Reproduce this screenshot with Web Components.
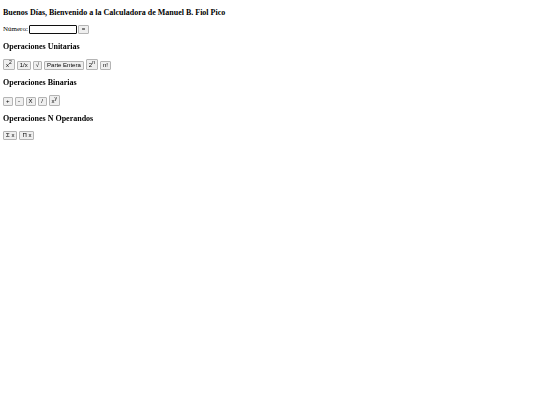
<!DOCTYPE html>
<html lang="es">
<head>
  <meta charset="utf-8">
  <title>Calculadora</title>
  <style>
    body {
      margin: 8px 3px;
      background: #fff;
      color: #000;
      font-family: "Liberation Serif", "Times New Roman", serif;
      font-size: 7px;
      line-height: 9px;
    }
  </style>
</head>
<body>
  <calc-page>
    <span slot="title">Buenos Días, Bienvenido a la Calculadora de Manuel B. Fiol Pico</span>
    <calc-number></calc-number>
    <calc-group>
      <span slot="title">Operaciones Unitarias</span>
      <calc-button>x<sup>2</sup></calc-button>
      <calc-button>1/x</calc-button>
      <calc-button>√</calc-button>
      <calc-button>Parte Entera</calc-button>
      <calc-button>2<sup>n</sup></calc-button>
      <calc-button>n!</calc-button>
    </calc-group>
    <calc-group>
      <span slot="title">Operaciones Binarias</span>
      <calc-button>+</calc-button>
      <calc-button>-</calc-button>
      <calc-button>X</calc-button>
      <calc-button>/</calc-button>
      <calc-button>x<sup>y</sup></calc-button>
    </calc-group>
    <calc-group>
      <span slot="title">Operaciones N Operandos</span>
      <calc-button>Σ x</calc-button>
      <calc-button>Π x</calc-button>
    </calc-group>
  </calc-page>

  <script>
    class CalcButton extends HTMLElement {
      constructor() {
        super();
        this.attachShadow({ mode: "open" }).innerHTML = `
          <style>
            :host { display: block; }
            button {
              display: block;
              box-sizing: border-box;
              min-width: var(--button-min-width, 9px);
              margin: 0;
              padding: 0 2px;
              border: 1px solid #b4b4b4;
              border-radius: 1px;
              background: #efefef;
              color: #000;
              font: 6px/7px "Liberation Sans", Arial, sans-serif;
              white-space: nowrap;
            }
            ::slotted(sup) {
              font-size: 5px;
              line-height: 5px;
            }
          </style>
          <button type="button"><slot></slot></button>
        `;
      }
    }

    class CalcNumber extends HTMLElement {
      constructor() {
        super();
        this.attachShadow({ mode: "open" }).innerHTML = `
          <style>
            :host {
              --button-min-width: 11px;
              display: flex;
              align-items: center;
              gap: 1px;
            }
            input {
              box-sizing: border-box;
              width: 48px;
              height: 9px;
              margin: 0;
              padding: 0 1px;
              border: 1px solid #101010;
              border-radius: 1px;
              outline: none;
              background: #fff;
              font: 6px/7px "Liberation Sans", Arial, sans-serif;
            }
          </style>
          <label for="numero">Número:</label>
          <input id="numero" type="text">
          <calc-button>=</calc-button>
        `;
      }

      connectedCallback() {
        this.shadowRoot.getElementById("numero").focus();
      }
    }

    class CalcGroup extends HTMLElement {
      constructor() {
        super();
        this.attachShadow({ mode: "open" }).innerHTML = `
          <style>
            :host { display: block; }
            h3 {
              margin: 8px 0;
              font-size: 8px;
              line-height: 9px;
            }
            .row {
              display: flex;
              flex-wrap: wrap;
              align-items: last baseline;
              gap: 2px;
            }
          </style>
          <h3><slot name="title"></slot></h3>
          <div class="row"><slot></slot></div>
        `;
      }
    }

    class CalcPage extends HTMLElement {
      constructor() {
        super();
        this.attachShadow({ mode: "open" }).innerHTML = `
          <style>
            :host { display: block; }
            h3 {
              margin: 0 0 8px;
              font-size: 8px;
              line-height: 9px;
            }
          </style>
          <h3><slot name="title"></slot></h3>
          <slot></slot>
        `;
      }
    }

    customElements.define("calc-button", CalcButton);
    customElements.define("calc-number", CalcNumber);
    customElements.define("calc-group", CalcGroup);
    customElements.define("calc-page", CalcPage);
  </script>
</body>
</html>
